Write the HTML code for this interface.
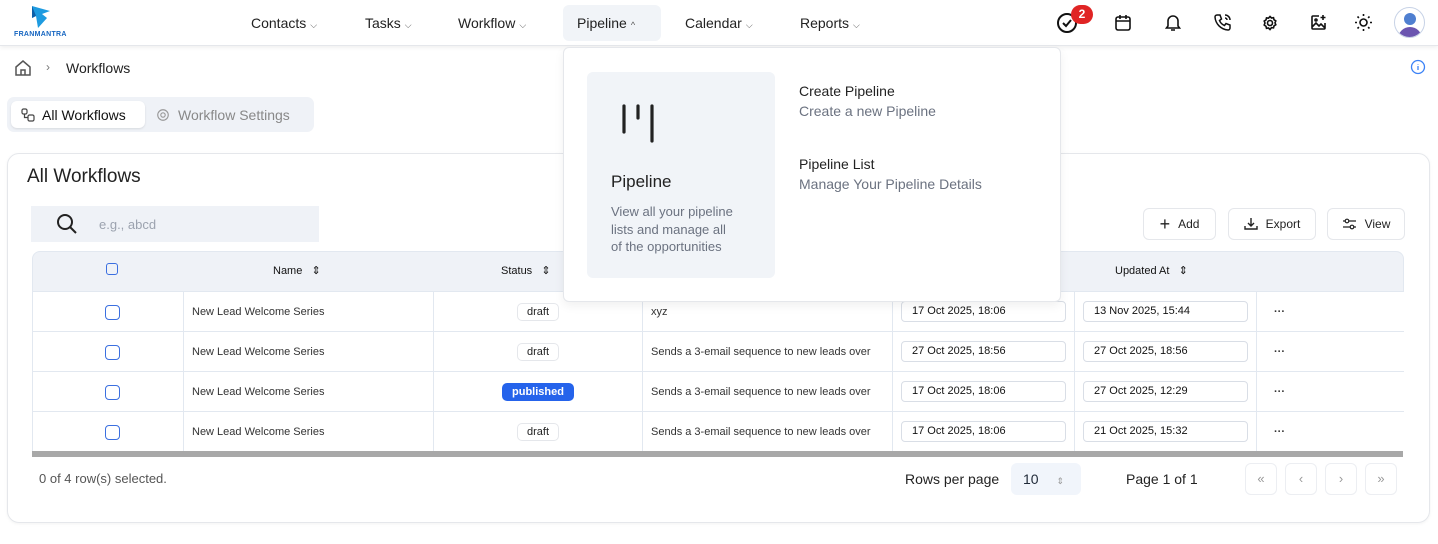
<!DOCTYPE html>
<html><head><meta charset="utf-8"><style>
*{box-sizing:border-box;margin:0;padding:0}
body{width:1438px;height:544px;background:#fff;font-family:"Liberation Sans",sans-serif;color:#1f2937;position:relative;overflow:hidden}
.a{position:absolute}
.nav{top:0;left:0;width:1438px;height:46px;border-bottom:1px solid #e5e7eb;box-shadow:0 2px 4px rgba(0,0,0,.06);background:#fff}
.ni{top:15px;font-size:14px;color:#222}
.ni small{font-size:9px;color:#555;margin-left:4px}
svg{display:block}
.card{left:7px;top:153px;width:1423px;height:370px;border:1px solid #e5e7eb;border-radius:12px;box-shadow:0 1px 3px rgba(0,0,0,.05)}
.btn{top:208px;height:32px;border:1px solid #e5e7eb;border-radius:6px;font-size:12px;display:flex;align-items:center;justify-content:center;gap:8px;color:#222}
.th{top:251px;left:32px;width:1372px;height:40px;background:#eff2f7;border:1px solid #e2e8f0;border-bottom:none;border-radius:8px 8px 0 0}
.row{left:32px;width:1372px;height:40px;border-top:1px solid #e2e8f0;border-left:1px solid #e2e8f0}
.c{position:absolute;top:0;height:40px;border-left:1px solid #e2e8f0;font-size:11px;color:#333;display:flex;align-items:center}
.cb{width:15px;height:15px;border:1.5px solid #3b6fe0;border-radius:4px;position:absolute;left:72px;top:13px}
.pill{border:1px solid #e5e7eb;border-radius:5px;padding:2px 9px;font-size:11px;color:#222}
.pub{background:#2563eb;color:#fff;border-color:#2563eb;font-weight:bold}
.dt{position:absolute;top:9px;height:21px;border:1px solid #d9dee6;border-radius:4px;font-size:11px;padding:3px 10px;width:165px;color:#111}
.pg{top:463px;width:32px;height:32px;border:1px solid #eceef2;border-radius:6px;font-size:13px;color:#999;text-align:center;line-height:30px}
</style></head><body>
<div class="a nav"></div>
<div class="a" style="left:14px;top:5px">
<svg width="56" height="28" viewBox="0 0 56 28"><path d="M18 1 L36 6 L28 9 L33 13 L24 23 L22 11 L18 13Z" fill="#1e9be0"/><path d="M18 1 L22 11 L18 13Z" fill="#0d5fa8"/></svg>
</div>
<div class="a" style="left:14px;top:31px;font-size:7px;font-weight:bold;color:#1565c0;letter-spacing:.3px">FRANMANTRA</div>
<div class="a ni" style="left:251px">Contacts<small>⌵</small></div>
<div class="a ni" style="left:365px">Tasks<small>⌵</small></div>
<div class="a ni" style="left:458px">Workflow<small>⌵</small></div>
<div class="a" style="left:563px;top:5px;width:98px;height:36px;background:#f1f4f8;border-radius:6px"></div>
<div class="a ni" style="left:577px">Pipeline<small>^</small></div>
<div class="a ni" style="left:685px">Calendar<small>⌵</small></div>
<div class="a ni" style="left:800px">Reports<small>⌵</small></div>
<svg class="a" style="left:1056px;top:12px" width="22" height="22" viewBox="0 0 22 22"><circle cx="11" cy="11" r="9" fill="none" stroke="#111" stroke-width="2"/><path d="M7 11l3 3 5-6" fill="none" stroke="#111" stroke-width="2"/></svg>
<div class="a" style="left:1071px;top:5px;width:22px;height:19px;border-radius:10px;background:#e02424;color:#fff;font-size:12px;font-weight:bold;text-align:center;line-height:19px">2</div>
<svg class="a" style="left:1114px;top:14px" width="18" height="18" viewBox="0 0 18 18" fill="none" stroke="#111" stroke-width="1.6"><rect x="2" y="3" width="14" height="13" rx="2"/><path d="M2 7h14M6 1v4M12 1v4"/></svg>
<svg class="a" style="left:1164px;top:13px" width="18" height="19" viewBox="0 0 18 19" fill="none" stroke="#111" stroke-width="1.6"><path d="M4 13V8a5 5 0 0110 0v5l1.5 2h-13z M7 17h4"/></svg>
<svg class="a" style="left:1214px;top:13px" width="18" height="18" viewBox="0 0 18 18" fill="none" stroke="#111" stroke-width="1.5"><path d="M3 2h3l1.5 4-2 1.5a9 9 0 005 5l1.5-2 4 1.5v3a2 2 0 01-2 2A14 14 0 011 4a2 2 0 012-2zM11 2a5 5 0 015 5M11 5a2 2 0 012 2"/></svg>
<svg class="a" style="left:1262px;top:15px" width="16" height="16" viewBox="0 0 16 16" fill="none" stroke="#111" stroke-width="1.6"><circle cx="8" cy="8" r="2.5"/><path d="M8 1.5l1.5 1.5 2-.3.5 2 1.8 1.2-.8 1.9.8 1.9-1.8 1.2-.5 2-2-.3L8 14.5 6.5 13l-2 .3-.5-2L2.2 10 3 8l-.8-1.9L4 4.9l.5-2 2 .3z"/></svg>
<svg class="a" style="left:1310px;top:14px" width="17" height="17" viewBox="0 0 17 17" fill="none" stroke="#111" stroke-width="1.6"><path d="M9 2H3a1 1 0 00-1 1v11a1 1 0 001 1h11a1 1 0 001-1V9M2 13l4-4 3 3 2-2 4 4M13 1v5M10.5 3.5h5"/><circle cx="6" cy="6" r="1"/></svg>
<svg class="a" style="left:1354px;top:13px" width="19" height="19" viewBox="0 0 19 19" fill="none" stroke="#111" stroke-width="1.6"><circle cx="9.5" cy="9.5" r="3.5"/><path d="M9.5 1v2M9.5 16v2M1 9.5h2M16 9.5h2M3.5 3.5l1.4 1.4M14.1 14.1l1.4 1.4M3.5 15.5l1.4-1.4M14.1 4.9l1.4-1.4"/></svg>
<div class="a" style="left:1394px;top:7px;width:31px;height:31px;border-radius:50%;border:1px solid #c7d2e6;overflow:hidden;background:#fff">
<div class="a" style="left:9px;top:5px;width:12px;height:12px;border-radius:50%;background:#4f7fd0"></div>
<div class="a" style="left:3px;top:19px;width:24px;height:16px;border-radius:12px 12px 0 0;background:#6b55b0"></div></div>

<svg class="a" style="left:14px;top:59px" width="18" height="18" viewBox="0 0 18 18" fill="none" stroke="#555" stroke-width="1.5"><path d="M2 8l7-6 7 6v8H2z M7 16v-5h4v5"/></svg>
<div class="a" style="left:46px;top:60px;font-size:12px;color:#777">›</div>
<div class="a" style="left:66px;top:60px;font-size:14px;color:#222">Workflows</div>
<svg class="a" style="left:1410px;top:59px" width="16" height="16" viewBox="0 0 16 16" fill="none" stroke="#3b82f6" stroke-width="1.3"><circle cx="8" cy="8" r="6.5"/><path d="M8 7v4M8 5v.5"/></svg>

<div class="a" style="left:7px;top:97px;width:307px;height:35px;background:#eff2f7;border-radius:7px"></div>
<div class="a" style="left:11px;top:101px;width:134px;height:27px;background:#fff;border-radius:6px;box-shadow:0 1px 2px rgba(0,0,0,.1)"></div>
<svg class="a" style="left:21px;top:108px" width="14" height="14" viewBox="0 0 14 14" fill="none" stroke="#444" stroke-width="1.2"><rect x="1" y="1" width="5" height="5" rx="1.5"/><rect x="7" y="7" width="6" height="6" rx="1.5"/><path d="M3.5 6v3.5H7"/></svg>
<div class="a" style="left:42px;top:107px;font-size:14px;color:#111">All Workflows</div>
<svg class="a" style="left:156px;top:108px" width="14" height="14" viewBox="0 0 16 16" fill="none" stroke="#999" stroke-width="1.3"><circle cx="8" cy="8" r="2.5"/><circle cx="8" cy="8" r="6"/></svg>
<div class="a" style="left:178px;top:107px;font-size:14px;color:#888">Workflow Settings</div>

<div class="a card"></div>
<div class="a" style="left:27px;top:166px;font-size:19px;color:#222">All Workflows</div>
<div class="a" style="left:31px;top:206px;width:288px;height:36px;background:#eff2f7"></div>
<svg class="a" style="left:56px;top:213px" width="22" height="22" viewBox="0 0 22 22" fill="none" stroke="#222" stroke-width="2"><circle cx="9" cy="9" r="7"/><path d="M14 14l6 6"/></svg>
<div class="a" style="left:99px;top:217px;font-size:13px;color:#9ca3af">e.g., abcd</div>
<div class="a btn" style="left:1143px;width:73px"><span style="font-size:18px;font-weight:300">+</span>Add</div>
<div class="a btn" style="left:1228px;width:88px"><svg width="14" height="14" viewBox="0 0 14 14" fill="none" stroke="#222" stroke-width="1.4"><path d="M7 1v8M4 6l3 3 3-3M1 9v3h12V9"/></svg>Export</div>
<div class="a btn" style="left:1327px;width:78px"><svg width="15" height="14" viewBox="0 0 15 14" fill="none" stroke="#222" stroke-width="1.2"><path d="M1 4h13M1 10h13"/><circle cx="5" cy="4" r="1.8" fill="#fff"/><circle cx="10" cy="10" r="1.8" fill="#fff"/></svg>View</div>

<div class="a th"></div>
<div class="a" style="left:106px;top:263px;width:12px;height:12px;border:1.3px solid #3b6fe0;border-radius:3px"></div>
<div class="a" style="left:273px;top:264px;font-size:11px;color:#111">Name &nbsp; ⇕</div>
<div class="a" style="left:501px;top:264px;font-size:11px;color:#111">Status &nbsp; ⇕</div>
<div class="a" style="left:1115px;top:264px;font-size:11px;color:#111">Updated At &nbsp; ⇕</div>

<div class="a row" style="top:291px"><div class="cb"></div>
<div class="c" style="left:150px;width:250px;padding-left:8px">New Lead Welcome Series</div>
<div class="c" style="left:400px;width:209px;justify-content:center"><span class="pill">draft</span></div>
<div class="c" style="left:609px;width:250px;padding-left:8px;overflow:hidden;white-space:nowrap">xyz</div>
<div class="c" style="left:859px;width:182px"></div><div class="dt" style="left:868px">17 Oct 2025, 18:06</div>
<div class="c" style="left:1041px;width:182px"></div><div class="dt" style="left:1050px">13 Nov 2025, 15:44</div>
<div class="c" style="left:1223px;width:149px;padding-left:17px;font-weight:bold">···</div></div>

<div class="a row" style="top:331px"><div class="cb"></div>
<div class="c" style="left:150px;width:250px;padding-left:8px">New Lead Welcome Series</div>
<div class="c" style="left:400px;width:209px;justify-content:center"><span class="pill">draft</span></div>
<div class="c" style="left:609px;width:250px;padding-left:8px;overflow:hidden;white-space:nowrap">Sends a 3-email sequence to new leads over</div>
<div class="c" style="left:859px;width:182px"></div><div class="dt" style="left:868px">27 Oct 2025, 18:56</div>
<div class="c" style="left:1041px;width:182px"></div><div class="dt" style="left:1050px">27 Oct 2025, 18:56</div>
<div class="c" style="left:1223px;width:149px;padding-left:17px;font-weight:bold">···</div></div>

<div class="a row" style="top:371px"><div class="cb"></div>
<div class="c" style="left:150px;width:250px;padding-left:8px">New Lead Welcome Series</div>
<div class="c" style="left:400px;width:209px;justify-content:center"><span class="pill pub">published</span></div>
<div class="c" style="left:609px;width:250px;padding-left:8px;overflow:hidden;white-space:nowrap">Sends a 3-email sequence to new leads over</div>
<div class="c" style="left:859px;width:182px"></div><div class="dt" style="left:868px">17 Oct 2025, 18:06</div>
<div class="c" style="left:1041px;width:182px"></div><div class="dt" style="left:1050px">27 Oct 2025, 12:29</div>
<div class="c" style="left:1223px;width:149px;padding-left:17px;font-weight:bold">···</div></div>

<div class="a row" style="top:411px"><div class="cb"></div>
<div class="c" style="left:150px;width:250px;padding-left:8px">New Lead Welcome Series</div>
<div class="c" style="left:400px;width:209px;justify-content:center"><span class="pill">draft</span></div>
<div class="c" style="left:609px;width:250px;padding-left:8px;overflow:hidden;white-space:nowrap">Sends a 3-email sequence to new leads over</div>
<div class="c" style="left:859px;width:182px"></div><div class="dt" style="left:868px">17 Oct 2025, 18:06</div>
<div class="c" style="left:1041px;width:182px"></div><div class="dt" style="left:1050px">21 Oct 2025, 15:32</div>
<div class="c" style="left:1223px;width:149px;padding-left:17px;font-weight:bold">···</div></div>
<div class="a" style="left:32px;top:451px;width:1371px;height:6px;background:#a8a8a8"></div>

<div class="a" style="left:39px;top:471px;font-size:13px;color:#555">0 of 4 row(s) selected.</div>
<div class="a" style="left:905px;top:471px;font-size:14px;color:#222">Rows per page</div>
<div class="a" style="left:1011px;top:463px;width:70px;height:32px;background:#f1f5fb;border-radius:6px;font-size:14px;padding:8px 12px">10 <span style="font-size:9px;color:#999;margin-left:14px">⇕</span></div>
<div class="a" style="left:1126px;top:471px;font-size:14px;color:#222">Page 1 of 1</div>
<div class="a pg" style="left:1245px">«</div>
<div class="a pg" style="left:1285px">‹</div>
<div class="a pg" style="left:1325px">›</div>
<div class="a pg" style="left:1365px">»</div>

<div class="a" style="left:563px;top:47px;width:498px;height:255px;background:#fff;border:1px solid #e5e7eb;border-radius:6px;box-shadow:0 4px 10px rgba(0,0,0,.06)"></div>
<div class="a" style="left:587px;top:72px;width:188px;height:206px;background:#f1f4f8;border-radius:6px"></div>
<svg class="a" style="left:618px;top:102px" width="40" height="42" viewBox="0 0 40 42" fill="none" stroke="#222" stroke-width="3.2" stroke-linecap="round"><path d="M6 4v26M20 4v12M34 4v35"/></svg>
<div class="a" style="left:611px;top:172px;font-size:17px;color:#222">Pipeline</div>
<div class="a" style="left:611px;top:203px;font-size:13px;line-height:17.5px;color:#6b7280;white-space:nowrap">View all your pipeline<br>lists and manage all<br>of the opportunities</div>
<div class="a" style="left:799px;top:83px;font-size:14px;color:#222">Create Pipeline</div>
<div class="a" style="left:799px;top:103px;font-size:14px;color:#6b7280">Create a new Pipeline</div>
<div class="a" style="left:799px;top:156px;font-size:14px;color:#222">Pipeline List</div>
<div class="a" style="left:799px;top:176px;font-size:14px;color:#6b7280">Manage Your Pipeline Details</div>
</body></html>
